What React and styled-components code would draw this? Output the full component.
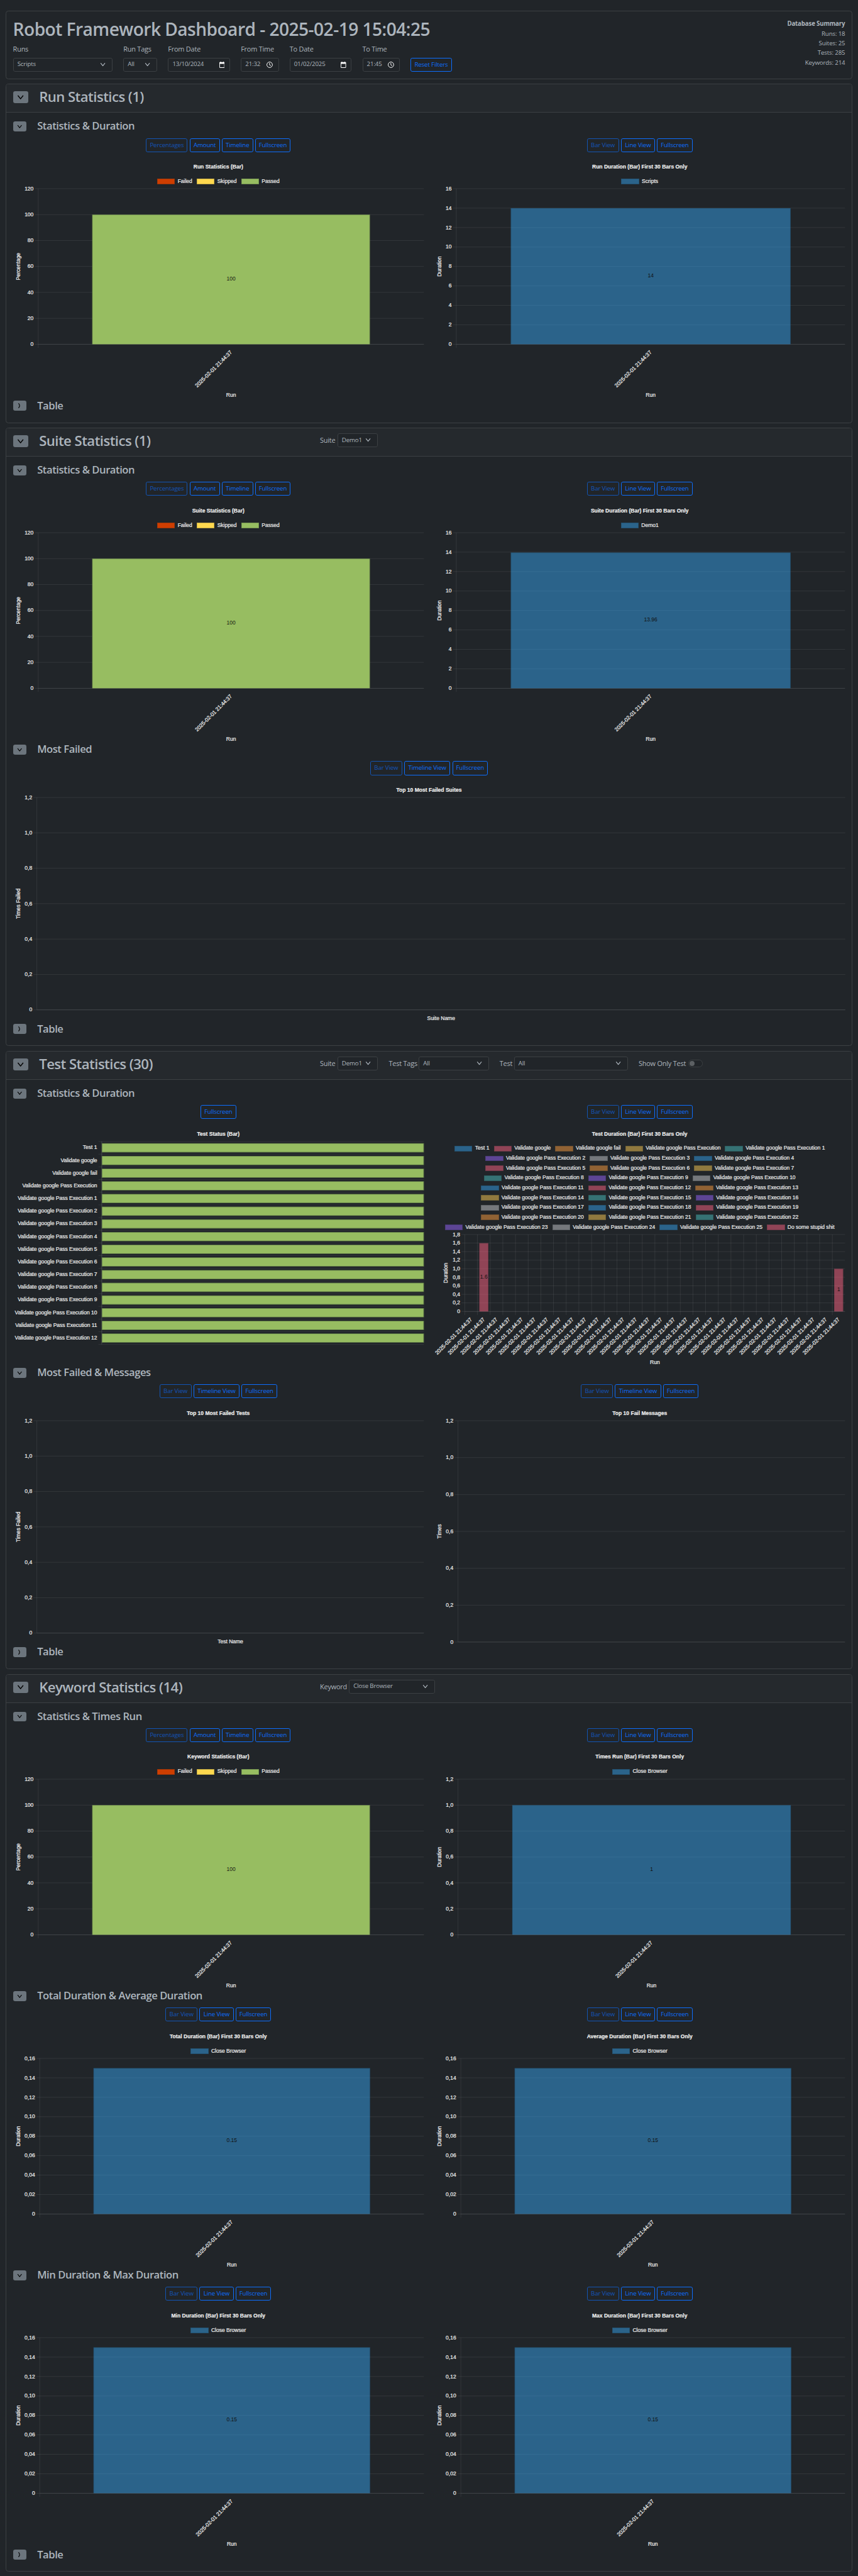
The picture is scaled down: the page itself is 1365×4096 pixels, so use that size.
import React from "react";
import styled, { createGlobalStyle, css } from "styled-components";

/* Every length is written in design pixels and scaled once, here. */
const SCALE = 1365 / 1920;
const u = (n) => `${(n * SCALE).toFixed(3)}px`;

const SECTION_HEIGHT = 624.8;
const CHART_HEIGHT = SECTION_HEIGHT - 84;
const STAMP = "2025-02-01 21:44:37";

const color = {
  page: "#212529",
  head: "#25292d",
  line: "#3c4043",
  text: "#adb5bd",
  primary: "#0d6efd",
  toggle: "#6c757d",
  chartText: "#eeeeee",
  grid: "rgba(255,255,255,0.105)",
  pass: "#97bd61",
  skip: "#fed84f",
  fail: "#ce3e01",
};

const palette = [
  "rgba(54,162,235,0.5)",
  "rgba(255,99,132,0.5)",
  "rgba(255,159,64,0.5)",
  "rgba(255,205,86,0.5)",
  "rgba(75,192,192,0.5)",
  "rgba(153,102,255,0.5)",
  "rgba(201,203,207,0.5)",
];

const GlobalStyle = createGlobalStyle`
  * { box-sizing: border-box; }
  html, body { margin: 0; background: ${color.page}; }
  body {
    color: ${color.text};
    font-family: "Open Sans", "Noto Sans", sans-serif;
    font-size: ${u(16)};
    line-height: 1.5;
    overflow-x: hidden;
  }
`;

const Page = styled.main`
  display: flex;
  flex-direction: column;
  gap: ${u(10.2)};
  height: ${u(5761)};
  padding: ${u(24)} ${u(12)} 0;
`;

const Card = styled.section`
  flex: none;
  height: ${(p) => u(p.$height)};
  border: 1px solid ${color.line};
  border-radius: ${u(6)};
  overflow: hidden;
`;

const TopCard = styled(Card)`
  display: flex;
  justify-content: space-between;
  padding: ${u(15.6)} ${u(15.6)} 0;
`;

const PageTitle = styled.h1`
  margin: 0 0 ${u(8)};
  height: ${u(48)};
  font-size: ${u(39.6)};
  line-height: ${u(49)};
  font-weight: 600;
  letter-spacing: ${u(-0.78)};
  white-space: nowrap;
`;

const Filters = styled.div`
  display: flex;
  align-items: flex-end;
  gap: ${u(24)};
`;

const Field = styled.label`
  display: flex;
  flex-direction: column;
  width: ${(p) => u(p.$w)};
  font-size: ${u(15.4)};
  line-height: ${u(24)};
  gap: ${u(8)};
  letter-spacing: ${u(-0.3)};
  white-space: nowrap;
`;

const Control = styled.span`
  display: flex;
  align-items: center;
  justify-content: space-between;
  width: ${(p) => u(p.$w)};
  height: ${u(31)};
  padding: 0 ${(p) => u(p.$end ?? 14)} 0 ${u(8.6)};
  border: 1px solid ${color.line};
  border-radius: ${u(4)};
  background: ${color.page};
  font-size: ${u(13.7)};
  line-height: ${u(29)};
  letter-spacing: ${u(-0.25)};
  white-space: nowrap;
`;

const Button = styled.button`
  width: ${(p) => u(p.$w)};
  height: ${u(31)};
  padding: 0;
  border: 1px solid ${color.primary};
  border-radius: ${u(4)};
  background: transparent;
  color: ${color.primary};
  font-family: inherit;
  font-size: ${u(13.7)};
  line-height: ${u(29)};
  letter-spacing: ${u(-0.22)};
  white-space: nowrap;
  ${(p) => p.disabled && css`opacity: 0.65;`}
`;

const Summary = styled.div`
  padding-top: ${u(1.8)};
  text-align: right;
  font-size: ${u(13.6)};
  line-height: ${u(21.5)};
  letter-spacing: ${u(-0.2)};
`;

const SummaryTitle = styled.div`
  font-weight: 700;
`;

const CardHead = styled.header`
  display: flex;
  align-items: flex-start;
  height: ${u(63.3)};
  padding: ${u(11.5)} ${u(15.6)} 0;
  border-bottom: 1px solid ${color.line};
  background: ${color.head};
`;

const HeadLeft = styled.div`
  display: flex;
  align-items: flex-start;
  width: ${u(687)};
`;

const HeadTitle = styled.h2`
  margin: ${u(-3)} 0 0 ${u(24.5)};
  font-size: ${u(31.2)};
  line-height: ${u(38)};
  font-weight: 600;
  letter-spacing: ${u(-0.8)};
  white-space: nowrap;
`;

const HeadFilters = styled.div`
  display: flex;
  gap: ${u(24)};
  line-height: ${u(31)};
`;

const InlineField = styled.label`
  display: flex;
  align-items: center;
  justify-content: space-between;
  width: ${(p) => u(p.$w)};
  height: ${u(31)};
  font-size: ${u(15.4)};
  letter-spacing: ${u(-0.3)};
  white-space: nowrap;
`;

const Switch = styled.span`
  display: flex;
  align-items: center;
  width: ${u(32)};
  height: ${u(16)};
  padding-left: ${u(1)};
  border: 1px solid ${color.line};
  border-radius: ${u(8)};
  background: ${color.page};
`;

const Knob = styled.span`
  width: ${u(11)};
  height: ${u(11)};
  border-radius: 50%;
  background: #5c6063;
`;

const Toggle = styled.button`
  display: grid;
  place-items: center;
  flex: none;
  width: ${(p) => u(p.$large ? 34 : 30)};
  height: ${(p) => u(p.$large ? 26 : 22)};
  margin-top: ${(p) => u(p.$large ? 4.5 : 0)};
  padding: 0;
  border: 0;
  border-radius: ${u(4.5)};
  background: ${color.toggle};
  color: #000;
`;

const CardBody = styled.div`
  padding: ${u(20)} ${u(15.6)} 0;
`;

const SectionBox = styled.div`
  height: ${u(SECTION_HEIGHT)};
`;

const SectionHead = styled.div`
  display: flex;
  align-items: flex-start;
  height: ${u(37)};
`;

const SectionTitle = styled.h4`
  margin: ${u(-4)} 0 0 ${u(24.3)};
  font-size: ${u(23.4)};
  line-height: ${u(29)};
  font-weight: 600;
  letter-spacing: ${u(-0.65)};
  white-space: nowrap;
`;

const Columns = styled.div`
  display: grid;
  grid-template-columns: ${(p) => (p.$full ? "1fr" : "1fr 1fr")};
  column-gap: ${u(24)};
`;

const ButtonRow = styled.div`
  display: flex;
  justify-content: center;
  gap: ${u(4.3)};
  height: ${u(47)};
`;

const ChartBox = styled.figure`
  display: flex;
  flex-direction: column;
  margin: 0;
  height: ${u(CHART_HEIGHT)};
  color: ${color.chartText};
  font-family: "Liberation Sans", Arial, sans-serif;
  font-size: ${u(12)};
  -webkit-text-stroke: 0.2px currentColor;
`;

const ChartTitle = styled.figcaption`
  flex: none;
  height: ${u(34.4)};
  line-height: ${u(34)};
  text-align: center;
  font-weight: 700;
`;

const Legend = styled.div`
  flex: none;
  padding: ${u(5)} 0;
`;

const LegendRow = styled.div`
  display: flex;
  justify-content: center;
  align-items: center;
  gap: ${u(10)};
  height: ${u(22)};
`;

const LegendItem = styled.span`
  display: flex;
  align-items: center;
  gap: ${u(6)};
  line-height: ${u(14)};
  white-space: nowrap;
`;

const Swatch = styled.i`
  width: ${u(40)};
  height: ${u(12.4)};
  background: ${(p) => p.$fill};
  box-shadow: inset 0 0 0 ${u(1)} rgba(20, 30, 35, 0.32);
`;

const Plot = styled.svg`
  display: block;
  flex: none;
  overflow: visible;
  font-size: 12px;
  -webkit-text-stroke: 0;
`;

const AxisText = styled.g`
  fill: ${color.chartText};
  text {
    stroke: ${color.chartText};
    stroke-width: 0.3px;
  }
`;

/* ---------- icons ---------- */

const Chevron = ({ size = 12, right = false, width = 2 }) => (
  <svg width={u(size)} height={u(size)} viewBox="0 0 16 16" fill="none" stroke="currentColor" strokeWidth={width} strokeLinecap="round" strokeLinejoin="round">
    <path d={right ? "M6 2.5c3.4 4 3.4 7 0 11" : "M2.5 4.5 8 11.5l5.5-7"} />
  </svg>
);

const CalendarIcon = () => (
  <svg width={u(12)} height={u(14)} viewBox="0 0 12 14">
    <path fill="#fff" fillRule="evenodd" d="M2 0h1.4v1.2h5.2V0H10v1.2h.8c.7 0 1.2.5 1.2 1.2v10.4c0 .7-.5 1.2-1.2 1.2H1.2C.5 14 0 13.500 0 12.800V2.400c0-.7.5-1.200 1.200-1.200H2zM1.300 5v7.700h9.400V5z" />
  </svg>
);

const ClockIcon = () => (
  <svg width={u(14)} height={u(14)} viewBox="0 0 14 14" fill="none" stroke="#fff" strokeWidth="1.4">
    <circle cx="7" cy="7" r="6.200" />
    <path d="M6.800 3v4.300l3 1.900" />
  </svg>
);

/* ---------- controls ---------- */

const Select = ({ w, children }) => (
  <Control $w={w}>
    {children}
    <Chevron size={13} />
  </Control>
);

const buttonWidths = {
  Percentages: 93,
  Amount: 68,
  Timeline: 70,
  Fullscreen: 79.5,
  "Bar View": 71.5,
  "Line View": 76.7,
  "Timeline View": 103.6,
};

const ViewButtons = ({ names }) => (
  <ButtonRow>
    {names.map((name, i) => (
      <Button key={name} $w={buttonWidths[name]} disabled={i === 0 && names.length > 1}>
        {name}
      </Button>
    ))}
  </ButtonRow>
);

/* ---------- charts ---------- */

const axisLeftByChars = { 2: 49.2, 3: 56, 4: 59.3 };

function VerticalPlot({ wide, top, bottom, ticks, max, yTitle, xTitle, left, count = 0, bars = [], titleX = 11.5 }) {
  const width = wide ? 1862 : 919;
  const height = CHART_HEIGHT - top;
  const base = bottom - top;
  const widest = ticks[ticks.length - 1];
  const x0 = left ?? (widest.includes(",") && widest.length === 3 ? 53 : axisLeftByChars[widest.length]);
  const step = count ? (width - x0) / count : 0;
  const mid = (x0 + width) / 2;
  return (
    <Plot width={u(width)} height={u(height)} viewBox={`0 0 ${width} ${height}`}>
      <g stroke={color.grid} strokeWidth="1.1">
        {ticks.map((t, i) => {
          const y = base - (base * i) / (ticks.length - 1);
          return <line key={t} x1={x0 - 7.500} x2={width} y1={y} y2={y} />;
        })}
        <line x1={x0} x2={width} y1={base} y2={base} />
        <line x1={x0} x2={x0} y1={0} y2={base + (count ? 8 : 0)} />
        {Array.from({ length: Math.max(0, count - 1) }, (_, i) => (
          <line key={i} x1={x0 + step * (i + 1)} x2={x0 + step * (i + 1)} y1={0} y2={base + 8} />
        ))}
      </g>
      {bars.map((b) => {
        const h = (base * b.value) / max;
        const bx = x0 + step * (b.index + 0.14);
        return (
          <g key={b.index}>
            <rect x={bx} y={base - h} width={step * 0.72} height={h} fill={b.fill} />
            <path d={`M${bx + 0.5} ${base}V${base - h + 0.5}h${step * 0.72 - 1}V${base}`} fill="none" stroke="rgba(20,30,35,0.28)" />
            <text x={x0 + step * (b.index + 0.5)} y={base - h / 2 + 2.600} textAnchor="middle" fill={b.ink ?? "#111"}>
              {b.label}
            </text>
          </g>
        );
      })}
      <AxisText>
        {ticks.map((t, i) => (
          <text key={t} x={x0 - 10.500} y={base - (base * i) / (ticks.length - 1) + 3.800} textAnchor="end">
            {t}
          </text>
        ))}
        {Array.from({ length: count }, (_, i) => (
          <text key={i} textAnchor="end" transform={`translate(${x0 + step * (i + 0.5)} ${base + 15.700}) rotate(-45)`} y="4.200">
            {STAMP}
          </text>
        ))}
        <text textAnchor="middle" transform={`translate(${titleX} ${base / 2}) rotate(-90)`} y="3.800">
          {yTitle}
        </text>
        {xTitle && (
          <text x={mid} y={528 - top + 4.200} textAnchor="middle">
            {xTitle}
          </text>
        )}
      </AxisText>
    </Plot>
  );
}

function StatusPlot({ names }) {
  const top = 34.4;
  const x0 = 198.2;
  const row = 28.37;
  const height = CHART_HEIGHT - top;
  return (
    <Plot width={u(919)} height={u(height)} viewBox={`0 0 919 ${height}`}>
      <g stroke={color.grid} strokeWidth="1.1">
        {Array.from({ length: names.length + 1 }, (_, i) => (
          <line key={i} x1={x0 - 7.500} x2="919" y1={i * row} y2={i * row} />
        ))}
        <line x1={x0} x2={x0} y1="0" y2={names.length * row} />
        <line x1={x0} x2={x0} y1="0" y2={names.length * row} />
      </g>
      {names.map((name, i) => (
        <g key={name}>
          <rect x={x0} y={(i + 0.14) * row} width={919 - x0} height={row * 0.72} fill={color.pass} />
          <rect x={x0 + 0.5} y={(i + 0.14) * row + 0.5} width={918 - x0} height={row * 0.72 - 1} fill="none" stroke="rgba(20,30,35,0.5)" />
        </g>
      ))}
      <AxisText>
        {names.map((name, i) => (
          <text key={name} x={x0 - 10.300} y={(i + 0.5) * row + 3.300} textAnchor="end">
            {name}
          </text>
        ))}
      </AxisText>
    </Plot>
  );
}

const Chart = ({ buttons, title, legend, children }) => (
  <div>
    <ViewButtons names={buttons} />
    <ChartBox>
      <ChartTitle>{title}</ChartTitle>
      {legend && (
        <Legend>
          {legend.map((row, i) => (
            <LegendRow key={i}>
              {row.map(([label, fill]) => (
                <LegendItem key={label}>
                  <Swatch $fill={fill} />
                  {label}
                </LegendItem>
              ))}
            </LegendRow>
          ))}
        </Legend>
      )}
      {children}
    </ChartBox>
  </div>
);

const statusLegend = [[["Failed", color.fail], ["Skipped", color.skip], ["Passed", color.pass]]];
const percentTicks = ["0", "20", "40", "60", "80", "100", "120"];
const secondTicks = ["0", "2", "4", "6", "8", "10", "12", "14", "16"];
const unitTicks = ["0", "0,2", "0,4", "0,6", "0,8", "1,0", "1,2"];
const testTicks = [...unitTicks, "1,4", "1,6", "1,8"];
const smallTicks = ["0", "0,02", "0,04", "0,06", "0,08", "0,10", "0,12", "0,14", "0,16"];

const durationButtons = ["Bar View", "Line View", "Fullscreen"];
const failedButtons = ["Bar View", "Timeline View", "Fullscreen"];

const StatisticsChart = ({ title }) => (
  <Chart buttons={["Percentages", "Amount", "Timeline", "Fullscreen"]} title={title} legend={statusLegend}>
    <VerticalPlot
      top={66.4}
      bottom={414.4}
      ticks={percentTicks}
      max={120}
      count={1}
      yTitle="Percentage"
      xTitle="Run"
      bars={[{ index: 0, value: 100, label: "100", fill: color.pass, ink: "#1c2214" }]}
    />
  </Chart>
);

const DurationChart = ({ title, series, ticks, max, value, label }) => (
  <Chart buttons={durationButtons} title={title} legend={[[[series, palette[0]]]]}>
    <VerticalPlot
      top={66.4}
      bottom={414.4}
      ticks={ticks}
      max={max}
      count={1}
      yTitle="Duration"
      xTitle="Run"
      bars={[{ index: 0, value, label, fill: palette[0] }]}
    />
  </Chart>
);

const FailedChart = ({ title, yTitle, xTitle, wide }) => (
  <Chart buttons={failedButtons} title={title}>
    <VerticalPlot wide={wide} top={34.4} bottom={xTitle ? 509.4 : 529.500} ticks={unitTicks} max={1.2} yTitle={yTitle} xTitle={xTitle} />
  </Chart>
);

const passName = (n) => `Validate google Pass Execution${n ? ` ${n}` : ""}`;
const testNames = [
  "Test 1",
  "Validate google",
  "Validate google fail",
  ...Array.from({ length: 26 }, (_, n) => passName(n)),
  "Do some stupid shit",
];
const testLegend = (() => {
  const items = testNames.map((name, i) => [name, palette[i % palette.length]]);
  const sizes = [5, 3, 3, 3, 3, 3, 3, 3, 4];
  let at = 0;
  return sizes.map((n) => items.slice(at, (at += n)));
})();

/* ---------- layout pieces ---------- */

const Section = ({ title, full, children }) => (
  <SectionBox>
    <SectionHead>
      <Toggle>
        <Chevron size={12} />
      </Toggle>
      <SectionTitle>{title}</SectionTitle>
    </SectionHead>
    <Columns $full={full}>{children}</Columns>
  </SectionBox>
);

const StatCard = ({ title, sections, filters, children }) => (
  <Card $height={134 + SECTION_HEIGHT * sections}>
    <CardHead>
      <HeadLeft>
        <Toggle $large>
          <Chevron size={16} />
        </Toggle>
        <HeadTitle>{title}</HeadTitle>
      </HeadLeft>
      <HeadFilters>{filters}</HeadFilters>
    </CardHead>
    <CardBody>
      {children}
      <SectionHead>
        <Toggle>
          <Chevron size={14} right width={1.8} />
        </Toggle>
        <SectionTitle>Table</SectionTitle>
      </SectionHead>
    </CardBody>
  </Card>
);

const SuiteFilter = () => (
  <InlineField $w={130}>
    Suite<Select w={91}>Demo1</Select>
  </InlineField>
);

export default function App() {
  return (
    <>
      <GlobalStyle />
      <Page>
        <TopCard $height={153}>
          <div>
            <PageTitle>Robot Framework Dashboard - 2025-02-19 15:04:25</PageTitle>
            <Filters>
              <Field $w={223}>Runs<Select w={223}>Scripts</Select></Field>
              <Field $w={76}>Run Tags<Select w={76}>All</Select></Field>
              <Field $w={139}>From Date<Control $w={139} $end={11}>13/10/2024<CalendarIcon /></Control></Field>
              <Field $w={85}>From Time<Control $w={85} $end={12}>21:32<ClockIcon /></Control></Field>
              <Field $w={139}>To Date<Control $w={139} $end={11}>01/02/2025<CalendarIcon /></Control></Field>
              <Field $w={84}>To Time<Control $w={84} $end={12}>21:45<ClockIcon /></Control></Field>
              <Button $w={92}>Reset Filters</Button>
            </Filters>
          </div>
          <Summary>
            <SummaryTitle>Database Summary</SummaryTitle>
            <div>Runs: 18</div>
            <div>Suites: 25</div>
            <div>Tests: 285</div>
            <div>Keywords: 214</div>
          </Summary>
        </TopCard>

        <StatCard title="Run Statistics (1)" sections={1}>
          <Section title="Statistics & Duration">
            <StatisticsChart title="Run Statistics (Bar)" />
            <DurationChart title="Run Duration (Bar) First 30 Bars Only" series="Scripts" ticks={secondTicks} max={16} value={14} label="14" />
          </Section>
        </StatCard>

        <StatCard title="Suite Statistics (1)" sections={2} filters={<SuiteFilter />}>
          <Section title="Statistics & Duration">
            <StatisticsChart title="Suite Statistics (Bar)" />
            <DurationChart title="Suite Duration (Bar) First 30 Bars Only" series="Demo1" ticks={secondTicks} max={16} value={13.96} label="13.96" />
          </Section>
          <Section title="Most Failed" full>
            <FailedChart wide title="Top 10 Most Failed Suites" yTitle="Times Failed" xTitle="Suite Name" />
          </Section>
        </StatCard>

        <StatCard
          title="Test Statistics (30)"
          sections={2}
          filters={
            <>
              <SuiteFilter />
              <InlineField $w={224}>Test Tags<Select w={157}>All</Select></InlineField>
              <InlineField $w={287}>Test<Select w={255}>All</Select></InlineField>
              <InlineField $w={143.5}>Show Only Test<Switch><Knob /></Switch></InlineField>
            </>
          }
        >
          <Section title="Statistics & Duration">
            <Chart buttons={["Fullscreen"]} title="Test Status (Bar)">
              <StatusPlot names={testNames.slice(0, 16)} />
            </Chart>
            <Chart buttons={durationButtons} title="Test Duration (Bar) First 30 Bars Only" legend={testLegend}>
              <VerticalPlot
                top={242.4}
                bottom={414.4}
                left={68.2}
                titleX={26}
                ticks={testTicks}
                max={1.8}
                count={30}
                yTitle="Duration"
                xTitle="Run"
                bars={[
                  { index: 1, value: 1.6, label: "1.6", fill: palette[1] },
                  { index: 29, value: 1, label: "1", fill: palette[1] },
                ]}
              />
            </Chart>
          </Section>
          <Section title="Most Failed & Messages">
            <FailedChart title="Top 10 Most Failed Tests" yTitle="Times Failed" xTitle="Test Name" />
            <FailedChart title="Top 10 Fail Messages" yTitle="Times" />
          </Section>
        </StatCard>

        <StatCard
          title="Keyword Statistics (14)"
          sections={3}
          filters={<InlineField $w={257.5}>Keyword<Select w={192.5}>Close Browser</Select></InlineField>}
        >
          <Section title="Statistics & Times Run">
            <StatisticsChart title="Keyword Statistics (Bar)" />
            <DurationChart title="Times Run (Bar) First 30 Bars Only" series="Close Browser" ticks={unitTicks} max={1.2} value={1} label="1" />
          </Section>
          <Section title="Total Duration & Average Duration">
            <DurationChart title="Total Duration (Bar) First 30 Bars Only" series="Close Browser" ticks={smallTicks} max={0.16} value={0.15} label="0.15" />
            <DurationChart title="Average Duration (Bar) First 30 Bars Only" series="Close Browser" ticks={smallTicks} max={0.16} value={0.15} label="0.15" />
          </Section>
          <Section title="Min Duration & Max Duration">
            <DurationChart title="Min Duration (Bar) First 30 Bars Only" series="Close Browser" ticks={smallTicks} max={0.16} value={0.15} label="0.15" />
            <DurationChart title="Max Duration (Bar) First 30 Bars Only" series="Close Browser" ticks={smallTicks} max={0.16} value={0.15} label="0.15" />
          </Section>
        </StatCard>
      </Page>
    </>
  );
}
